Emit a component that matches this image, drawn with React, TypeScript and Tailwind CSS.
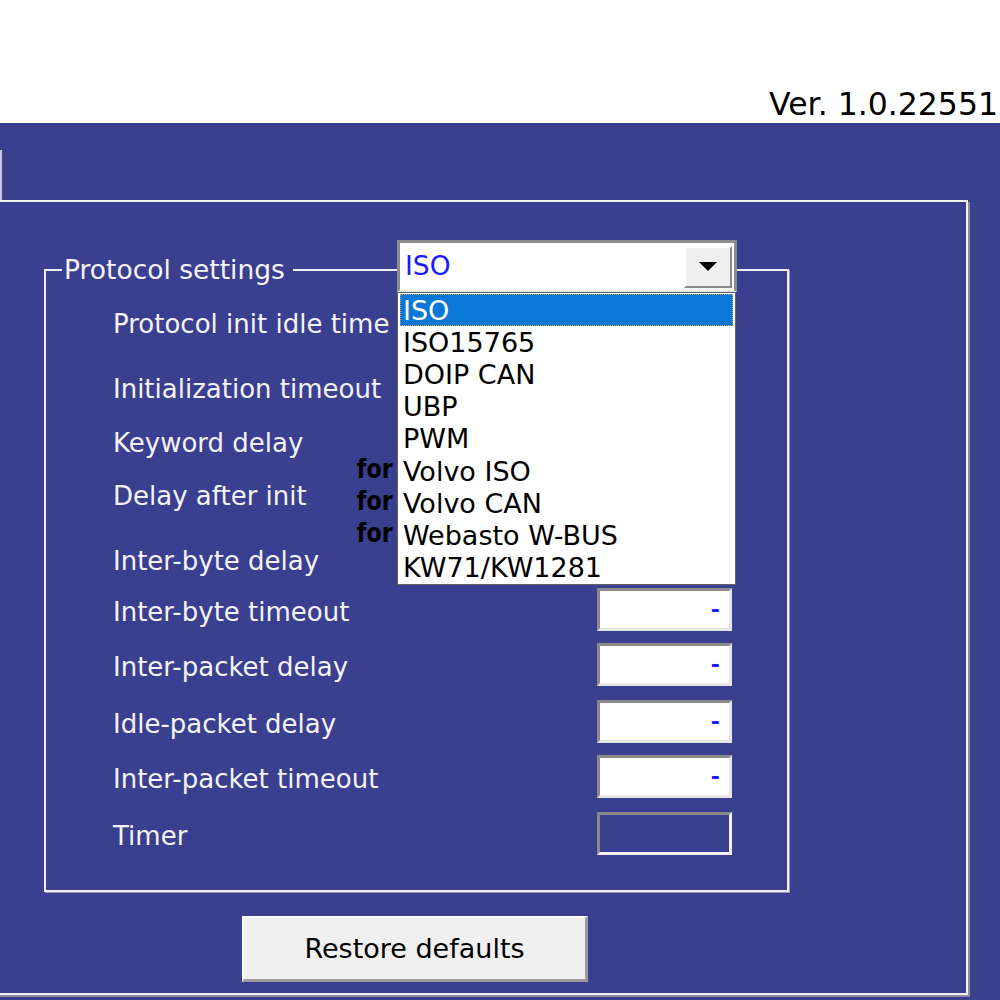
import React from "react";

const rows: { label: string; mt: string; disabled?: boolean }[] = [
  { label: "Protocol init idle time", mt: "mt-[15px]" },
  { label: "Initialization timeout", mt: "mt-[22px]" },
  { label: "Keyword delay", mt: "mt-[11px]" },
  { label: "Delay after init", mt: "mt-[10px]" },
  { label: "Inter-byte delay", mt: "mt-[22px]" },
  { label: "Inter-byte timeout", mt: "mt-[8px]" },
  { label: "Inter-packet delay", mt: "mt-[12px]" },
  { label: "Idle-packet delay", mt: "mt-[14px]" },
  { label: "Inter-packet timeout", mt: "mt-[12px]" },
  { label: "Timer", mt: "mt-[14px]", disabled: true },
];

const items = [
  "ISO",
  "ISO15765",
  "DOIP CAN",
  "UBP",
  "PWM",
  "Volvo ISO",
  "Volvo CAN",
  "Webasto W-BUS",
  "KW71/KW1281",
];

export default function App() {
  return (
    <div className="w-[1000px] h-[1000px] overflow-hidden bg-white font-['DejaVu_Sans',sans-serif]">
      {/* top white band with version */}
      <div className="h-[123px] flex items-end justify-end pr-[2px] pb-[3px]">
        <span className="text-[31.5px] leading-none text-black">Ver. 1.0.22551</span>
      </div>

      {/* blue area */}
      <div className="h-[877px] bg-[#3b3f8f] flex flex-col">
        <div className="h-[77px] flex items-end">
          <div className="w-[2px] h-[50px] bg-[#c4c6dc]" />
        </div>

        {/* tab page */}
        <div className="relative ml-[-2px] w-[970px] h-[795px] border-t-2 border-r-2 border-b-2 border-[#f2f2f2] shadow-[2px_2px_0_#8c8c9c] flex flex-col">
          <fieldset className="ml-[46px] mt-[53px] w-[745px] h-[637px] border-2 border-[#eeeeee] shadow-[1px_1px_0_#9a9ab0] px-0 pb-0 flex flex-col">
            <legend className="ml-[16px] pl-[2px] pr-[8px] text-[26.5px] leading-[30px] text-[#f4f4f8]">
              Protocol settings
            </legend>
            {rows.map((r) => (
              <div key={r.label} className={`${r.mt} h-[43px] flex items-center pl-[67px] pr-[55px]`}>
                <span className="pt-[5px] text-[26px] leading-none text-[#f4f4f8] whitespace-nowrap">
                  {r.label}
                </span>
                <div
                  className={
                    r.disabled
                      ? "ml-auto w-[135px] h-[43px] border-t-[3px] border-l-[3px] border-t-[#8a8a8a] border-l-[#8a8a8a] border-b-[3px] border-r-[3px] border-b-[#f0f0f0] border-r-[#f0f0f0]"
                      : "ml-auto w-[135px] h-[43px] bg-white border-t-[3px] border-l-[3px] border-t-[#8a8a8a] border-l-[#8a8a8a] border-b-[3px] border-r-[3px] border-b-[#e6e6e6] border-r-[#e6e6e6] flex items-center justify-end pr-[9px]"
                  }
                >
                  {!r.disabled && (
                    <span className="text-[22px] font-bold leading-none text-[#1a1aff]">-</span>
                  )}
                </div>
              </div>
            ))}
          </fieldset>

          <div className="mt-[24px] ml-[244px] w-[346px] h-[66px] bg-[#f0f0f0] border-t-2 border-l-2 border-t-white border-l-white border-b-[3px] border-r-[3px] border-b-[#9a9a9a] border-r-[#9a9a9a] flex items-center justify-center">
            <span className="text-[27px] leading-none text-black">Restore defaults</span>
          </div>

          {/* combobox with open list (overlay) */}
          <div className="absolute left-[399px] top-[38px] w-[340px]">
            <div className="h-[52px] bg-white border-t-[3px] border-l-[3px] border-r-[3px] border-t-[#8c8c8c] border-l-[#8c8c8c] border-r-[#8c8c8c] border-b-2 border-b-[#e4e4e4] flex items-center pl-[5px] pr-[2px]">
              <span className="text-[26.5px] leading-none text-[#1a1aff]">ISO</span>
              <div className="ml-auto w-[48px] h-[42px] bg-[#f0f0f0] border-t-2 border-l-2 border-t-white border-l-white border-b-2 border-r-2 border-b-[#8a8a8a] border-r-[#8a8a8a] flex items-center justify-center">
                <svg width="18" height="10" viewBox="0 0 18 10">
                  <polygon points="0,0 18,0 9,9" fill="#000" />
                </svg>
              </div>
            </div>
            <div className="relative w-[339px] h-[293px] bg-white border border-[#646464] pt-px px-[2px]">
              {items.map((it, i) => (
                <div
                  key={it}
                  className={
                    i === 0
                      ? "h-[32.2px] flex items-center pl-[2px] bg-[#0a78d7] border border-dotted border-[#d8a050] text-white"
                      : "h-[32.2px] flex items-center pl-[3px] text-black"
                  }
                >
                  <span className="text-[27px] leading-none whitespace-nowrap">{it}</span>
                </div>
              ))}
              <div className="absolute right-[100%] top-[160px] mr-[5px] text-right font-['DejaVu_Sans',sans-serif] font-bold text-[27px] leading-[32px] text-black scale-x-[0.82] origin-right">
                for
                <br />
                for
                <br />
                for
              </div>
            </div>
          </div>
        </div>
      </div>
    </div>
  );
}
